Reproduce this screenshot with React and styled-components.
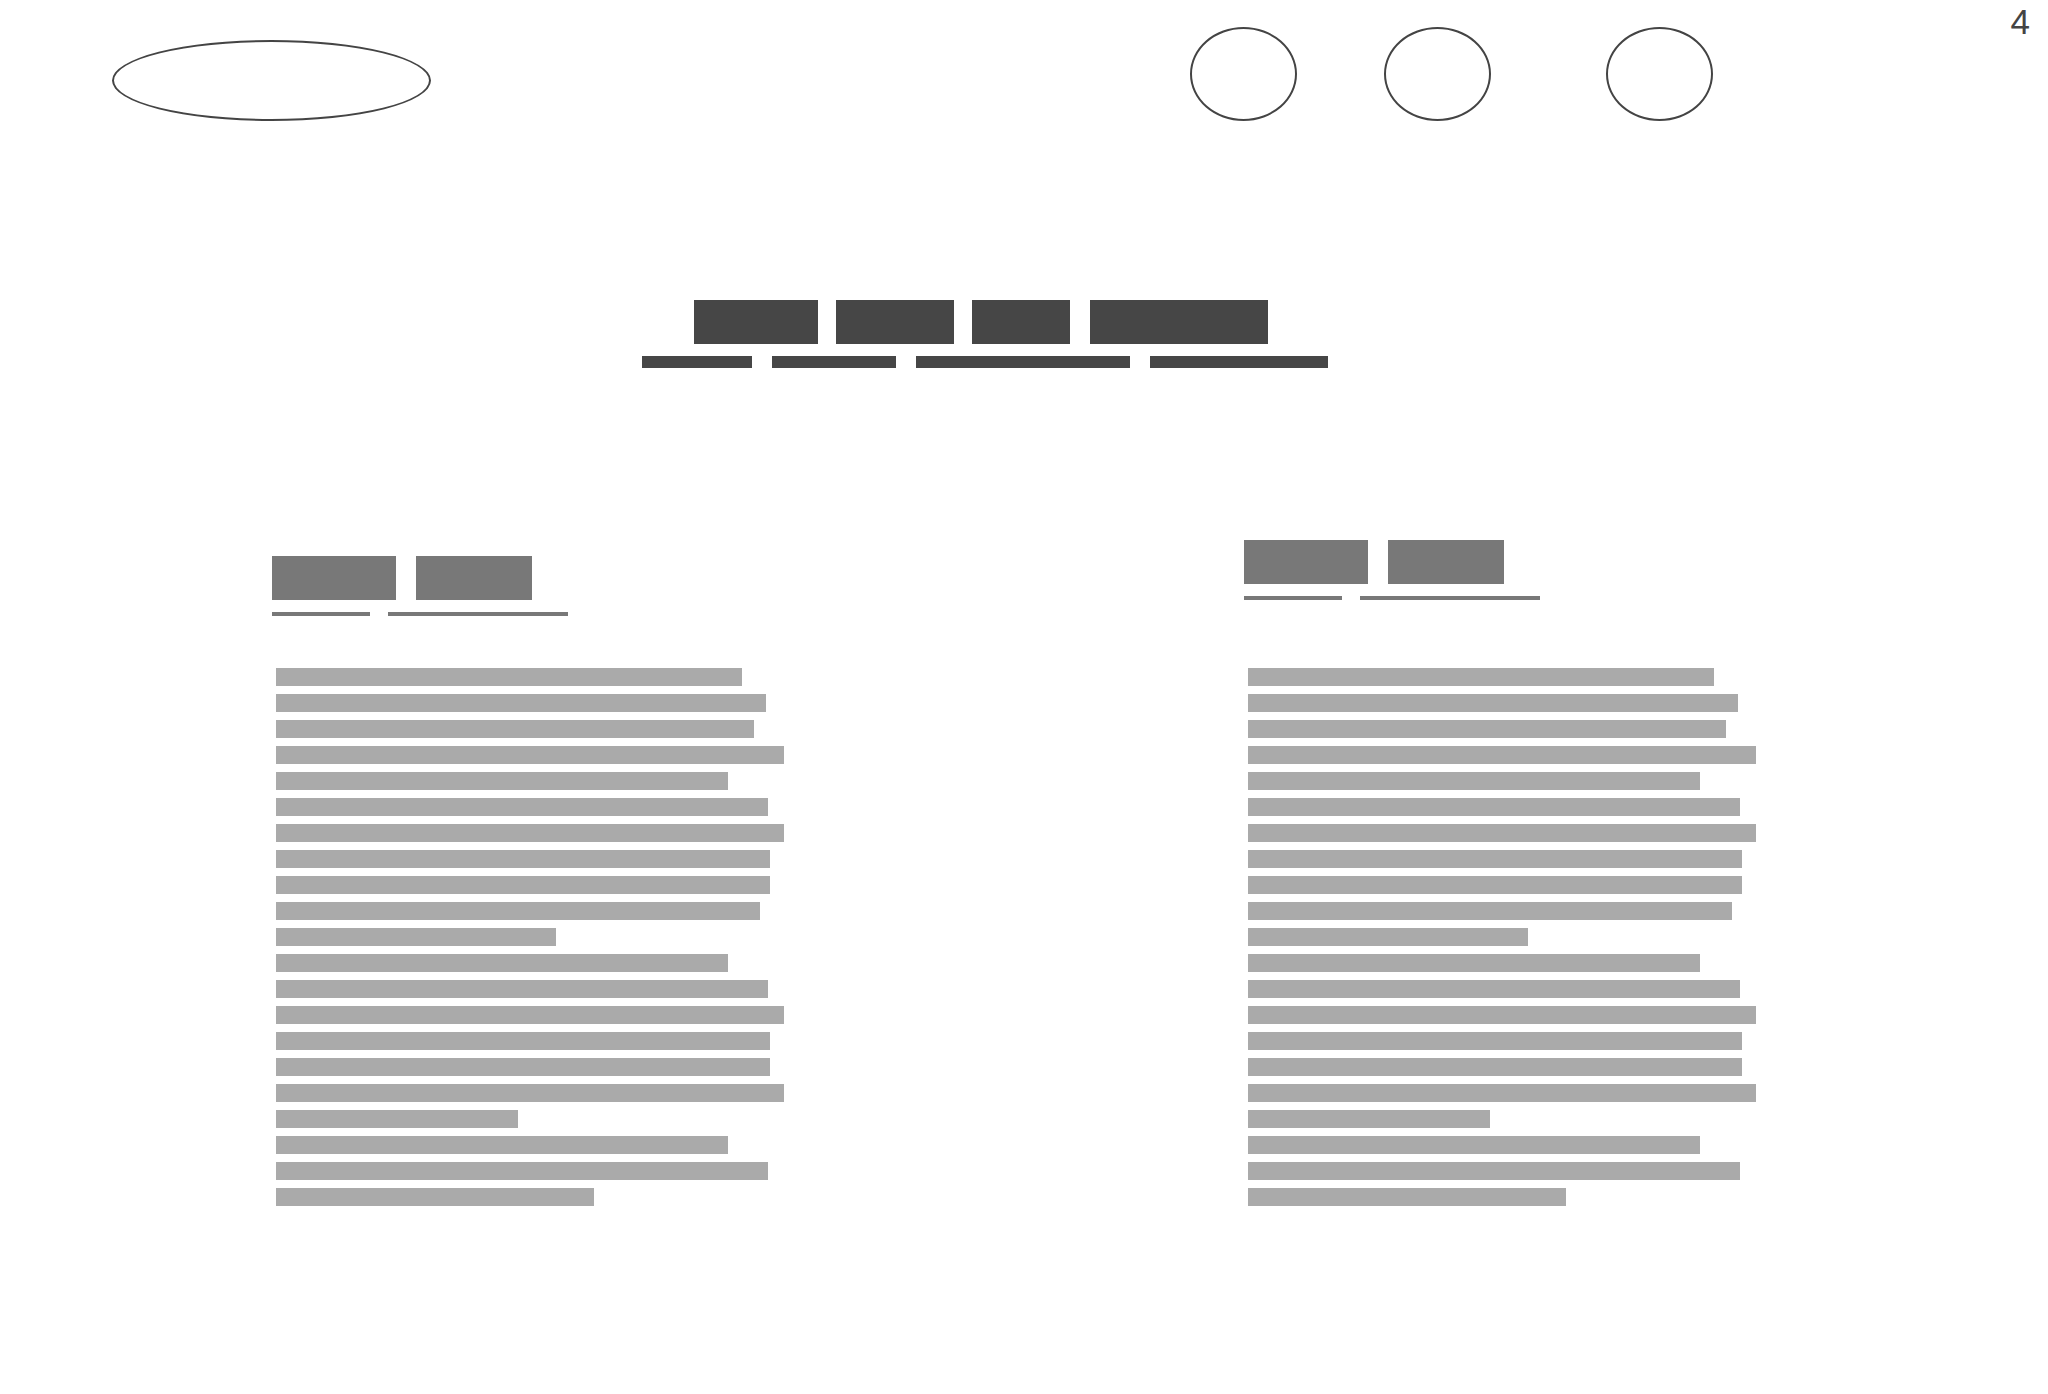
import React from "react";
import styled, { createGlobalStyle } from "styled-components";

const GlobalStyle = createGlobalStyle`
  * { box-sizing: border-box; }
  html, body { margin: 0; padding: 0; background: #ffffff; }
  body { font-family: "Liberation Sans", Arial, sans-serif; }
`;

const Page = styled.div`
  width: 2048px;
  min-height: 1394px;
  background: #ffffff;
  display: flex;
  flex-direction: column;
`;

const Header = styled.header`
  display: flex;
  align-items: flex-start;
  height: 121px;
`;

const Logo = styled.div`
  width: 319px;
  height: 81px;
  margin-top: 40px;
  margin-left: 112px;
  border: 2px solid #444444;
  border-radius: 50%;
`;

const Nav = styled.nav`
  display: flex;
  align-items: flex-start;
  margin-left: 759px;
  margin-top: 27px;
`;

const NavDot = styled.div`
  width: 107px;
  height: 94px;
  margin-left: ${(p) => p.$gap || 0}px;
  border: 2px solid #444444;
  border-radius: 50%;
`;

const PageNum = styled.div`
  margin-left: auto;
  margin-right: 18px;
  margin-top: 4px;
  font-size: 35px;
  line-height: 35px;
  color: #444444;
  font-weight: 400;
`;

const Hero = styled.section`
  display: flex;
  flex-direction: column;
  margin-top: 179px;
  gap: 12px;
`;

const TitleRow = styled.div`
  display: flex;
  margin-left: 694px;
`;

const TitleBlock = styled.div`
  width: ${(p) => p.$w}px;
  height: 44px;
  margin-right: ${(p) => p.$gap || 0}px;
  background: #464646;
`;

const SubRow = styled.div`
  display: flex;
  gap: 20px;
  margin-left: 642px;
`;

const SubBar = styled.div`
  width: ${(p) => p.$w}px;
  height: 12px;
  background: #464646;
`;

const Columns = styled.section`
  display: grid;
  grid-template-columns: 972px 1fr;
  margin-top: 172px;
  padding-left: 272px;
`;

const Column = styled.article`
  display: grid;
  grid-template-rows: 76px auto;
  row-gap: 52px;
`;

const Head = styled.div`
  display: flex;
  flex-direction: column;
  gap: 12px;
  padding-top: ${(p) => p.$offset}px;
`;

const HeadBoxes = styled.div`
  display: flex;
  gap: 20px;
`;

const HeadBox = styled.div`
  width: ${(p) => p.$w}px;
  height: 44px;
  background: #787878;
`;

const HeadLines = styled.div`
  display: flex;
  gap: 18px;
`;

const HeadLine = styled.div`
  width: ${(p) => p.$w}px;
  height: 4px;
  background: #787878;
`;

const TextBlock = styled.div`
  display: flex;
  flex-direction: column;
  gap: 8px;
  padding-left: 4px;
`;

const TextLine = styled.div`
  width: ${(p) => p.$w}px;
  height: 18px;
  background: #aaaaaa;
`;

const lineWidths = [
  466, 490, 478, 508, 452, 492, 508, 494, 494, 484, 280,
  452, 492, 508, 494, 494, 508, 242, 452, 492, 318,
];

function ColumnBlock({ offset }) {
  return (
    <Column>
      <Head $offset={offset}>
        <HeadBoxes>
          <HeadBox $w={124} />
          <HeadBox $w={116} />
        </HeadBoxes>
        <HeadLines>
          <HeadLine $w={98} />
          <HeadLine $w={180} />
        </HeadLines>
      </Head>
      <TextBlock>
        {lineWidths.map((w, i) => (
          <TextLine key={i} $w={w} />
        ))}
      </TextBlock>
    </Column>
  );
}

export default function App() {
  return (
    <>
      <GlobalStyle />
      <Page>
        <Header>
          <Logo />
          <Nav>
            <NavDot />
            <NavDot $gap={87} />
            <NavDot $gap={115} />
          </Nav>
          <PageNum>4</PageNum>
        </Header>
        <Hero>
          <TitleRow>
            <TitleBlock $w={124} $gap={18} />
            <TitleBlock $w={118} $gap={18} />
            <TitleBlock $w={98} $gap={20} />
            <TitleBlock $w={178} />
          </TitleRow>
          <SubRow>
            <SubBar $w={110} />
            <SubBar $w={124} />
            <SubBar $w={214} />
            <SubBar $w={178} />
          </SubRow>
        </Hero>
        <Columns>
          <ColumnBlock offset={16} />
          <ColumnBlock offset={0} />
        </Columns>
      </Page>
    </>
  );
}
